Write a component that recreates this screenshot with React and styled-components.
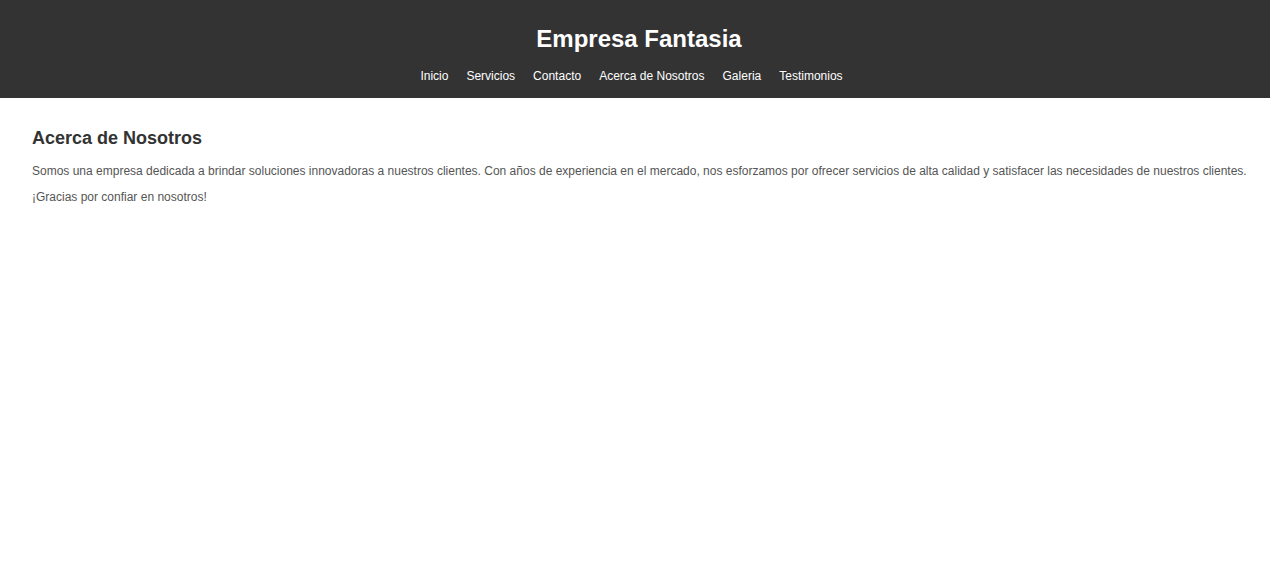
import React from "react";
import styled, { createGlobalStyle } from "styled-components";

const GlobalStyle = createGlobalStyle`
  body {
    margin: 0;
    font-family: "Liberation Sans", Arial, sans-serif;
    background: #fff;
  }
`;

const Header = styled.header`
  background: #333;
  color: #fff;
  text-align: center;
  padding: 25px 0 15px;
`;

const Title = styled.h1`
  margin: 0 0 16px;
  padding-left: 8px;
  font-size: 24px;
  font-weight: bold;
`;

const Nav = styled.nav`
  display: flex;
  justify-content: center;
  gap: 18px;
  padding-right: 7px;
`;

const NavLink = styled.a`
  color: #fff;
  text-decoration: none;
  font-size: 12px;
`;

const Section = styled.section`
  padding: 30px 8px 30px 32px;
`;

const Heading = styled.h2`
  margin: 0 0 9px;
  font-size: 18px;
  color: #333;
`;

const Text = styled.p`
  margin: 0;
  font-size: 12px;
  line-height: 26px;
  color: #555;
`;

const links = ["Inicio", "Servicios", "Contacto", "Acerca de Nosotros", "Galeria", "Testimonios"];

const App = () => {
  return (
    <div>
      <GlobalStyle />
      <Header>
        <Title>Empresa Fantasia</Title>
        <Nav>
          {links.map(link => (
            <NavLink key={link} href="#">{link}</NavLink>
          ))}
        </Nav>
      </Header>
      <Section>
        <Heading>Acerca de Nosotros</Heading>
        <Text>
          Somos una empresa dedicada a brindar soluciones innovadoras a nuestros clientes. Con años de experiencia en el mercado, nos esforzamos por ofrecer servicios de alta calidad y satisfacer las necesidades de nuestros clientes.
          <br />
          ¡Gracias por confiar en nosotros!
        </Text>
      </Section>
    </div>
  );
};

export default App;
